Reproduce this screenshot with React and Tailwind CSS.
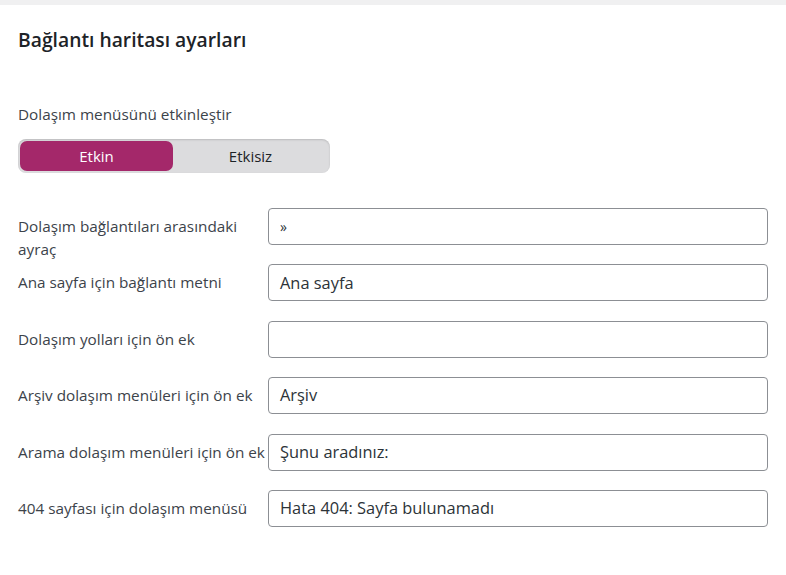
import React from "react";

const rows = [
  { label: "Dolaşım bağlantıları arasındaki ayraç", value: "»", small: true },
  { label: "Ana sayfa için bağlantı metni", value: "Ana sayfa" },
  { label: "Dolaşım yolları için ön ek", value: "" },
  { label: "Arşiv dolaşım menüleri için ön ek", value: "Arşiv" },
  { label: "Arama dolaşım menüleri için ön ek", value: "Şunu aradınız:" },
  { label: "404 sayfası için dolaşım menüsü", value: "Hata 404: Sayfa bulunamadı" },
];

export default function App() {
  return (
    <div
      className="min-h-[575px] w-[786px] bg-white text-[#3c434a]"
      style={{ fontFamily: '"Open Sans", "Noto Sans", sans-serif' }}
    >
      <div className="h-[5px] bg-[#f0f0f1]" />
      <div className="px-[18px]">
        <h1 className="mt-[21px] text-[19.3px] font-semibold leading-[28px] text-[#1d2327]">
          Bağlantı haritası ayarları
        </h1>
        <div className="mt-[50px] text-[15.3px] leading-[20px]">Dolaşım menüsünü etkinleştir</div>
        <div className="mt-[15px] flex h-[34px] w-[312px] rounded-[8px] bg-[#dcdcde] p-[2px] shadow-[inset_0_1px_2px_rgba(0,0,0,0.15)]">
          <div className="flex w-[153px] items-center justify-center rounded-[7px] bg-[#a4286a] text-[15px] text-white">
            Etkin
          </div>
          <div className="flex flex-1 items-center justify-center text-[15px] text-[#1d2327]">Etkisiz</div>
        </div>
        <div className="mt-[35px]">
          {rows.map((r, i) => (
            <div key={i} className="flex h-[56.4px]">
              <div className="w-[250px] shrink-0 pt-[7px] pr-[2px] text-[15.3px] leading-[23px] whitespace-normal">
                {r.label}
              </div>
              <div className="flex h-[37px] w-[500px] items-center rounded-[4px] border border-[#8c8f94] bg-white px-[11px]">
                <span className={r.small ? "text-[14px] text-[#2c3338]" : "text-[16.4px] text-[#2c3338]"}>{r.value}</span>
              </div>
            </div>
          ))}
        </div>
      </div>
    </div>
  );
}
